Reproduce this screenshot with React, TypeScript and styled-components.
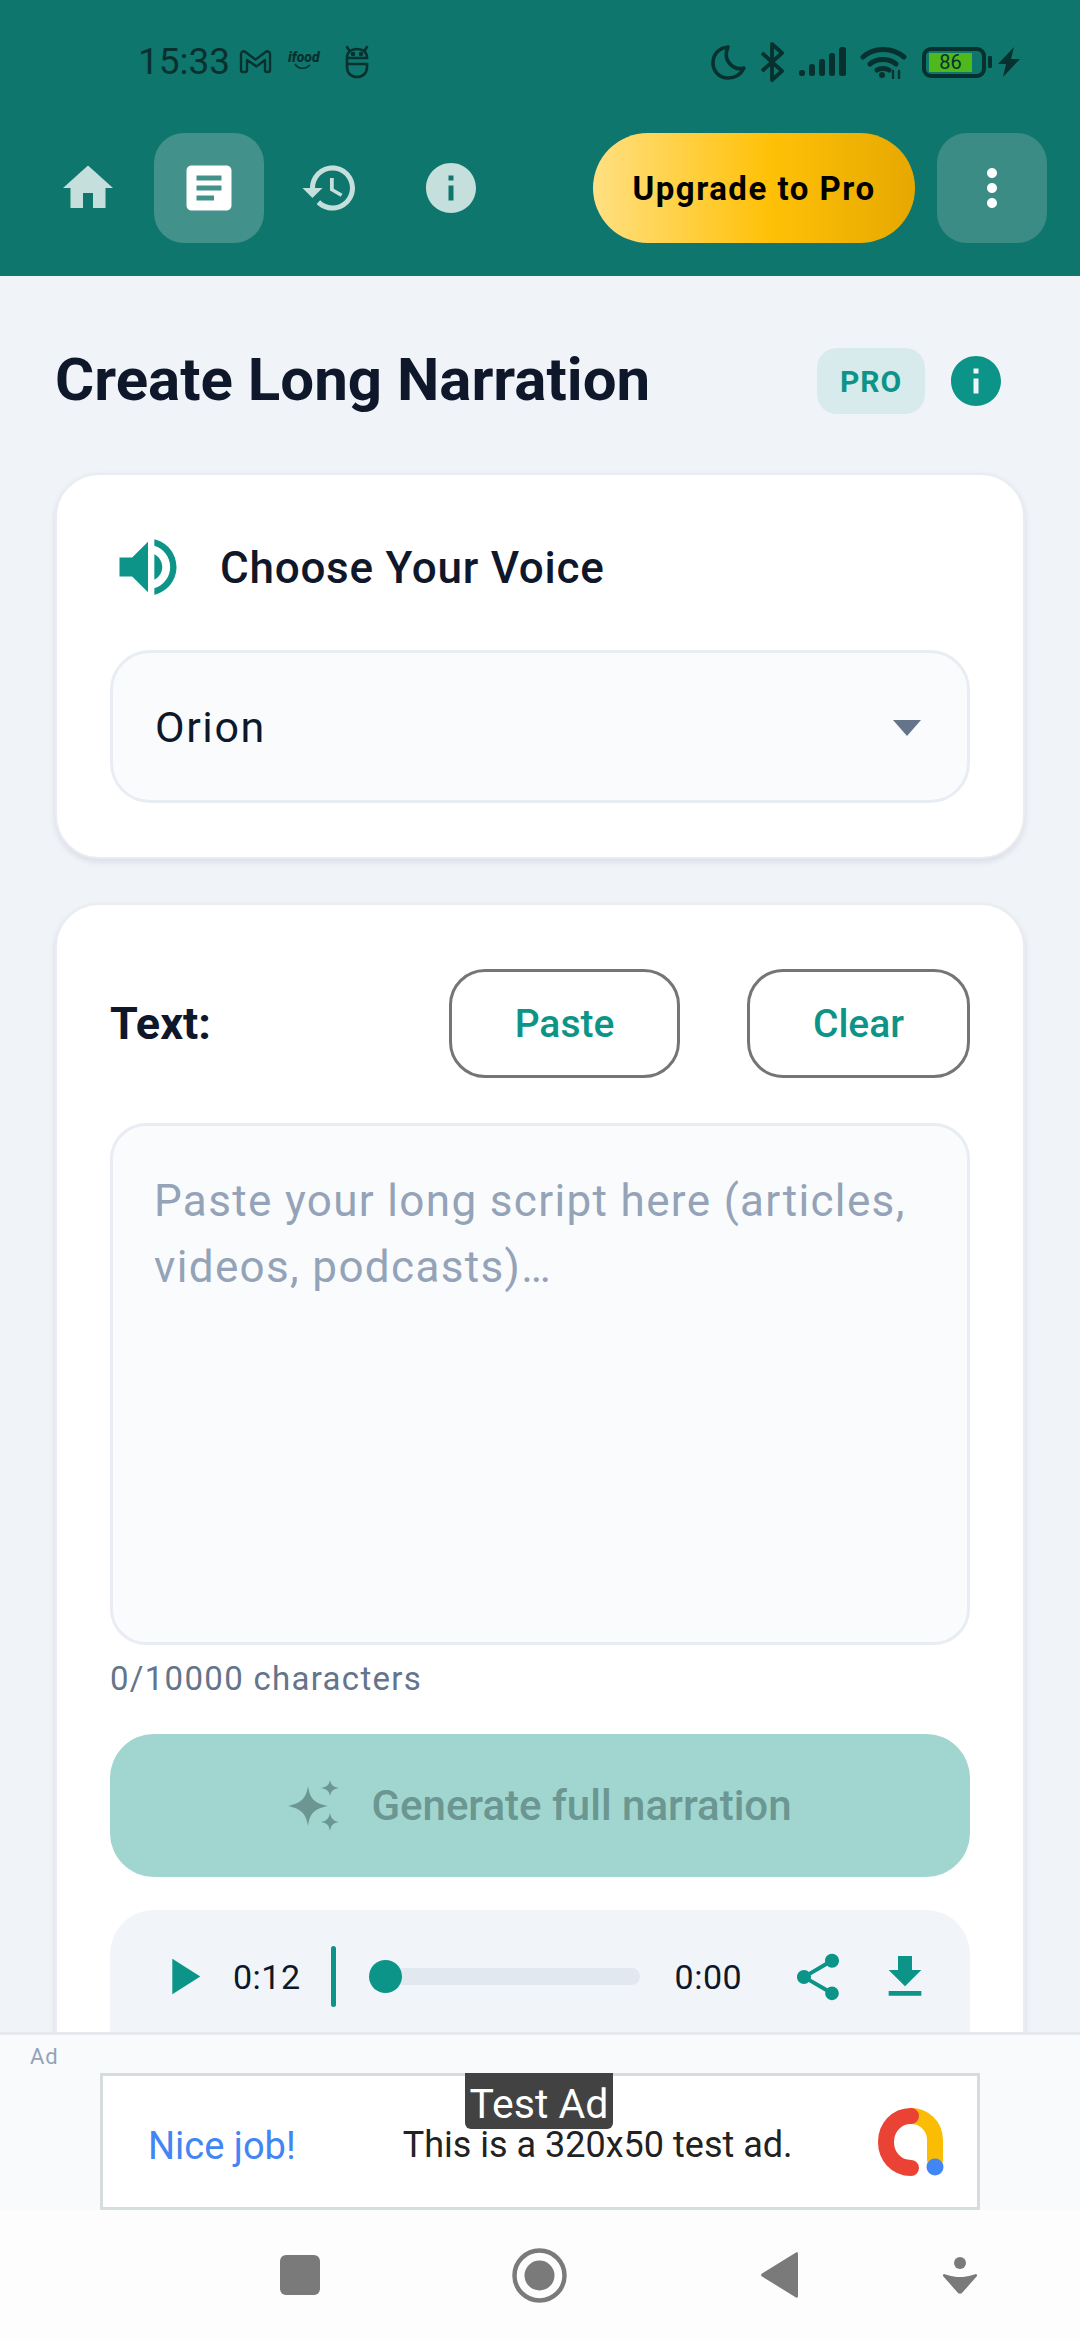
import styled, { createGlobalStyle } from "styled-components"

const GlobalStyle = createGlobalStyle`
  * { box-sizing: border-box; }
  html, body { margin: 0; padding: 0; background: #f0f4f9; }
  body { font-family: Roboto, "Noto Sans", sans-serif; }
`

const teal = "#0d9488"
const ink = "#0f172a"
const statusInk = "#07312f"

const Page = styled.div`
  width: 1080px;
  height: 2340px;
  display: flex;
  flex-direction: column;
  overflow: hidden;
`

const Header = styled.header`
  height: 276px;
  flex: none;
  background: #0f766e;
`

const StatusBar = styled.div`
  height: 133px;
  padding: 42px 60px 0 138px;
  display: flex;
  align-items: flex-start;
  justify-content: space-between;
  color: ${statusInk};
`

const StatusGroup = styled.div`
  height: 40px;
  display: flex;
  align-items: center;
`

const Clock = styled.span`
  font-size: 37px;
  line-height: 40px;
  width: 101px;
`

const StatusIcon = styled.svg<{ $gap?: number }>`
  flex: none;
  margin-left: ${(p) => p.$gap ?? 0}px;
  color: ${statusInk};
`

const FoodLogo = styled.span`
  position: relative;
  margin-left: 16px;
  width: 36px;
  height: 24px;
  font-size: 14px;
  line-height: 14px;
  font-weight: 900;
  font-style: italic;
  letter-spacing: 0;
  svg {
    position: absolute;
    left: 6px;
    top: 13px;
  }
`

const BatteryShell = styled.div`
  position: relative;
  margin-left: 15px;
  width: 64px;
  height: 31px;
  border: 4px solid ${statusInk};
  border-radius: 9px;
  padding: 2px 10px 2px 3px;
`

const BatteryFill = styled.div`
  height: 100%;
  background: #4fb81d;
  font-size: 20px;
  line-height: 19px;
  text-align: center;
  color: ${statusInk};
`

const BatteryNub = styled.div`
  width: 4px;
  height: 12px;
  margin-left: 2px;
  background: ${statusInk};
  border-radius: 1px;
`

const NavRow = styled.nav`
  height: 110px;
  padding: 0 33px;
  display: flex;
  gap: 11px;
`

const NavTile = styled.div<{ $active?: boolean; $solid?: boolean }>`
  width: 110px;
  height: 110px;
  display: grid;
  place-items: center;
  border-radius: 30px;
  background: ${(p) => (p.$active ? "#42918a" : p.$solid ? "#3a8c84" : "transparent")};
  color: ${(p) => (p.$active || p.$solid ? "#ffffff" : "#c5dfdc")};
`

const UpgradeButton = styled.div`
  width: 322px;
  height: 110px;
  margin-left: auto;
  margin-right: 11px;
  display: grid;
  place-items: center;
  border-radius: 55px;
  background: linear-gradient(90deg, #ffe082 0%, #ffc107 55%, #e6a800 100%);
  color: #000000;
  font-size: 33px;
  font-weight: 700;
  letter-spacing: 1.5px;
`

const Main = styled.main`
  flex: 1;
  min-height: 0;
  overflow: hidden;
  padding: 72px 55px 0;
`

const TitleRow = styled.div`
  height: 66px;
  padding-right: 19px;
  display: flex;
  align-items: center;
  margin-bottom: 59px;
`

const Title = styled.h1`
  flex: 1;
  margin: -2px 0 0 0;
  font-size: 60px;
  line-height: 66px;
  font-weight: 700;
  color: ${ink};
`

const ProBadge = styled.div`
  width: 108px;
  height: 66px;
  display: grid;
  place-items: center;
  border-radius: 20px;
  background: #d7ebec;
  color: ${teal};
  font-size: 30px;
  font-weight: 700;
  letter-spacing: 1px;
`

const InfoWrap = styled.div`
  margin-left: 21px;
  color: ${teal};
  height: 60px;
`

const Card = styled.section`
  background: #ffffff;
  border: 2px solid #e9edf2;
  border-radius: 44px;
  padding: 62px 53px 54px;
  box-shadow: 0 3px 6px rgba(15, 23, 42, 0.1);
`

const SecondCard = styled(Card)`
  margin-top: 44px;
  padding-top: 64px;
  padding-bottom: 0;
`

const VoiceHeading = styled.div`
  height: 60px;
  display: flex;
  align-items: center;
  gap: 34px;
  margin-bottom: 53px;
  color: ${teal};
`

const VoiceLabel = styled.h2`
  margin: 2px 0 0;
  font-size: 44px;
  font-weight: 500;
  letter-spacing: 0.75px;
  color: ${ink};
`

const Select = styled.div`
  height: 153px;
  padding: 0 42px;
  display: flex;
  align-items: center;
  justify-content: space-between;
  background: #f9fbfd;
  border: 3px solid #e8edf3;
  border-radius: 40px;
  font-size: 43px;
  letter-spacing: 1.6px;
  color: ${ink};
`

const Caret = styled.div`
  width: 0;
  height: 0;
  margin: 2px 4px 0 0;
  border-left: 14px solid transparent;
  border-right: 14px solid transparent;
  border-top: 16px solid #64748b;
`

const TextHead = styled.div`
  height: 109px;
  display: flex;
  align-items: center;
`

const TextLabel = styled.h2`
  flex: 1;
  margin: 0;
  font-size: 45px;
  font-weight: 700;
  color: ${ink};
`

const OutlineButton = styled.div<{ $width: number }>`
  width: ${(p) => p.$width}px;
  height: 109px;
  margin-left: ${(p) => (p.$width > 225 ? 0 : 67)}px;
  display: grid;
  place-items: center;
  border: 3px solid #757575;
  border-radius: 36px;
  font-size: 39px;
  font-weight: 500;
  color: ${teal};
`

const ScriptInput = styled.textarea`
  display: block;
  width: 100%;
  height: 522px;
  margin-top: 45px;
  padding: 42px 41px;
  background: #f9fbfd;
  border: 3px solid #e8edf3;
  border-radius: 36px;
  outline: none;
  resize: none;
  font-family: Roboto, sans-serif;
  font-size: 44px;
  line-height: 66px;
  letter-spacing: 1.35px;
  &::placeholder {
    color: #94a3b8;
    opacity: 1;
  }
`

const Counter = styled.div`
  margin-top: 14px;
  font-size: 33px;
  line-height: 40px;
  letter-spacing: 1.3px;
  color: #64748b;
`

const GenerateButton = styled.div`
  height: 143px;
  margin-top: 35px;
  display: flex;
  align-items: center;
  justify-content: center;
  gap: 31px;
  border-radius: 44px;
  background: #a0d6cf;
  color: #6b9692;
  font-size: 42px;
  font-weight: 500;
`

const Player = styled.div`
  height: 180px;
  margin-top: 33px;
  padding: 36px 0 0 42px;
  display: flex;
  align-items: flex-start;
  background: #f1f5f9;
  border-radius: 44px;
  color: ${teal};
`

const PlayerSlot = styled.div<{ $gap?: number }>`
  height: 61px;
  flex: none;
  margin-left: ${(p) => p.$gap ?? 0}px;
  display: flex;
  align-items: center;
`

const TimeText = styled(PlayerSlot)`
  font-size: 34px;
  letter-spacing: 0.5px;
  color: ${ink};
`

const Divider = styled(PlayerSlot)`
  width: 5px;
  border-radius: 3px;
  background: ${teal};
`

const Slider = styled(PlayerSlot)`
  position: relative;
  width: 271px;
`

const SliderTrack = styled.div`
  width: 100%;
  height: 17px;
  border-radius: 9px;
  background: #e2e8f0;
`

const SliderThumb = styled.div`
  position: absolute;
  left: 0;
  top: 14px;
  width: 33px;
  height: 33px;
  border-radius: 50%;
  background: ${teal};
`

const AdBar = styled.div`
  height: 178px;
  flex: none;
  position: relative;
  display: flex;
  flex-direction: column;
  background: #f8fafc;
  border-top: 3px solid #e5e9ee;
`

const AdTag = styled.div`
  padding: 9px 0 0 30px;
  height: 38px;
  font-size: 22px;
  line-height: 26px;
  letter-spacing: 1px;
  color: #94a3b8;
`

const AdBox = styled.div`
  position: relative;
  width: 880px;
  height: 137px;
  margin-left: 100px;
  padding: 0 33px 0 45px;
  display: flex;
  align-items: center;
  background: #ffffff;
  border: 3px solid #d5dedc;
  color: #222222;
`

const AdLabel = styled.div`
  position: absolute;
  left: 362px;
  top: -3px;
  width: 148px;
  height: 56px;
  display: grid;
  place-items: center;
  border-radius: 0 0 6px 6px;
  background: #424242;
  color: #ffffff;
  font-size: 41px;
  line-height: 56px;
  padding-top: 3px;
`

const AdHeadline = styled.div`
  padding-top: 9px;
  font-size: 38px;
  color: #4285f4;
`

const AdBody = styled.div`
  flex: 1;
  padding: 7px 0 0 107px;
  font-size: 36px;
`

const SystemNav = styled.div`
  height: 130px;
  flex: none;
  padding-left: 280px;
  display: flex;
  align-items: center;
  background: #fdfdfd;
  color: #7a7a7a;
`

const SystemIcon = styled.svg<{ $gap?: number }>`
  flex: none;
  margin-left: ${(p) => p.$gap ?? 0}px;
`

function MaterialIcon({ d, size = 60 }: { d: string; size?: number }) {
  return (
    <svg width={size} height={size} viewBox="0 0 24 24" fill="currentColor">
      <path d={d} />
    </svg>
  )
}

const icons = {
  home: "M10 20v-6h4v6h5v-8h3L12 3 2 12h3v8z",
  article:
    "M19 3H5c-1.1 0-2 .9-2 2v14c0 1.1.9 2 2 2h14c1.1 0 2-.9 2-2V5c0-1.1-.9-2-2-2zm-5 14H7v-2h7v2zm3-4H7v-2h10v2zm0-4H7V7h10v2z",
  history:
    "M13 3c-4.97 0-9 4.03-9 9H1l3.89 3.89.07.14L9 12H6c0-3.87 3.13-7 7-7s7 3.13 7 7-3.13 7-7 7c-1.93 0-3.68-.79-4.94-2.06l-1.42 1.42C8.27 19.99 10.51 21 13 21c4.97 0 9-4.03 9-9s-4.03-9-9-9zm-1 5v5l4.28 2.54.72-1.21-3.5-2.08V8H12z",
  info: "M12 2C6.48 2 2 6.48 2 12s4.48 10 10 10 10-4.48 10-10S17.52 2 12 2zm1 15h-2v-6h2v6zm0-8h-2V7h2v2z",
  more: "M12 8c1.1 0 2-.9 2-2s-.9-2-2-2-2 .9-2 2 .9 2 2 2zm0 2c-1.1 0-2 .9-2 2s.9 2 2 2 2-.9 2-2-.9-2-2-2zm0 6c-1.1 0-2 .9-2 2s.9 2 2 2 2-.9 2-2-.9-2-2-2z",
  volume:
    "M3 9v6h4l5 5V4L7 9H3zm13.5 3c0-1.77-1.02-3.29-2.5-4.03v8.05c1.48-.73 2.5-2.25 2.5-4.02zM14 3.23v2.06c2.89.86 5 3.54 5 6.71s-2.11 5.85-5 6.71v2.06c4.01-.91 7-4.49 7-8.77s-2.99-7.86-7-8.77z",
  play: "M8 5v14l11-7z",
  share:
    "M18 16.08c-.76 0-1.44.3-1.96.77L8.91 12.7c.05-.23.09-.46.09-.7s-.04-.47-.09-.7l7.05-4.11c.54.5 1.25.81 2.04.81 1.66 0 3-1.34 3-3s-1.34-3-3-3-3 1.34-3 3c0 .24.04.47.09.7L8.04 9.81C7.5 9.31 6.79 9 6 9c-1.66 0-3 1.34-3 3s1.34 3 3 3c.79 0 1.5-.31 2.04-.81l7.12 4.16c-.05.21-.08.43-.08.65 0 1.61 1.31 2.92 2.92 2.92 1.61 0 2.92-1.31 2.92-2.92s-1.31-2.92-2.92-2.92z",
  download: "M19 9h-4V3H9v6H5l7 7 7-7zM5 18v2h14v-2H5z",
}

function StatusLeft() {
  return (
    <StatusGroup>
      <Clock>15:33</Clock>
      <StatusIcon width="33" height="26" viewBox="0 0 33 26" fill="none" stroke="currentColor" strokeWidth="2.4" strokeLinejoin="round">
        <path d="M2 21V5c0-2.4 2.6-3.4 4.4-2l10.1 7.6L26.6 3c1.8-1.4 4.4-.4 4.4 2v16c0 1.2-.8 2-2 2h-1c-1.2 0-2-.8-2-2V11l-8.5 6.4L8 11v10c0 1.2-.8 2-2 2H4c-1.2 0-2-.8-2-2z" />
      </StatusIcon>
      <FoodLogo>
        ifood
        <svg width="18" height="8" viewBox="0 0 18 8" fill="none" stroke="currentColor" strokeWidth="1.6">
          <path d="M1 1c3 5 10 6 15 1" />
        </svg>
      </FoodLogo>
      <StatusIcon $gap={20} width="26" height="34" viewBox="0 0 26 34" fill="none" stroke="currentColor" strokeWidth="2.6" strokeLinecap="round">
        <path d="M3 2l2 3M23 2l-2 3" />
        <path d="M3 13c0-6 4-9 10-9s10 3 10 9H3M3 19h20v3c0 6-4 10-10 10S3 28 3 22V13" />
        <circle cx="9" cy="9" r="1" fill="currentColor" />
        <circle cx="17" cy="9" r="1" fill="currentColor" />
      </StatusIcon>
    </StatusGroup>
  )
}

function StatusRight() {
  return (
    <StatusGroup>
      <StatusIcon width="36" height="36" viewBox="0 0 36 36" fill="none" stroke="currentColor" strokeWidth="3.6" strokeLinejoin="round">
        <path d="M17 3C8 4 2 10 2 19c0 8 6 15 15 15 7 0 13-4 16-10-11 3-22-8-16-21z" />
      </StatusIcon>
      <StatusIcon $gap={13} width="25" height="40" viewBox="0 0 25 40" fill="none" stroke="currentColor" strokeWidth="3.8" strokeLinejoin="round">
        <path d="M2 11l20 18-10 9V2l10 9L2 29" />
      </StatusIcon>
      <StatusIcon $gap={13} width="49" height="32" viewBox="0 0 49 32" fill="currentColor">
        <rect x="1" y="24" width="6" height="6" rx="2.5" />
        <rect x="11" y="18" width="6" height="12" rx="2.5" />
        <rect x="21" y="13" width="6" height="17" rx="2.5" />
        <rect x="31" y="7" width="6" height="23" rx="2.5" />
        <rect x="41" y="1" width="7" height="29" rx="2.5" />
      </StatusIcon>
      <StatusIcon $gap={13} width="47" height="34" viewBox="0 0 47 34" fill="none" stroke="currentColor" strokeWidth="5" strokeLinecap="round">
        <path d="M3 12C14 2 32 2 44 12M10 19c7-6 19-6 26 0M17 25c3-2 9-2 12 0" />
        <circle cx="22" cy="30" r="3" fill="currentColor" stroke="none" />
        <path d="M33 26v7M39 26v7" strokeWidth="2.4" />
      </StatusIcon>
      <BatteryShell>
        <BatteryFill>86</BatteryFill>
      </BatteryShell>
      <BatteryNub />
      <StatusIcon $gap={6} width="22" height="30" viewBox="0 0 22 30" fill="currentColor">
        <path d="M16 0L0 17h8l-3 13 17-18h-9z" />
      </StatusIcon>
    </StatusGroup>
  )
}

function SparkleIcon() {
  return (
    <svg width="52" height="52" viewBox="0 0 52 52" fill="#6b9692">
      <path d="M20 6c2 13 6 17 20 20-14 3-18 7-20 20C18 33 13 29 0 26c13-3 18-7 20-20z" />
      <path d="M42 0c1 5 3 7 9 8-6 1-8 3-9 8-1-5-3-7-9-8 6-1 8-3 9-8zM42 33c1 5 3 8 9 9-6 1-8 3-9 9-1-6-3-8-9-9 6-1 8-4 9-9z" />
    </svg>
  )
}

function AdLogo() {
  return (
    <svg width="66" height="68" viewBox="0 0 66 68" fill="none" strokeLinecap="round">
      <path d="M57 52V32C57 18 46 8 33 8" stroke="#fbbc04" strokeWidth="16" />
      <path d="M33 8C18 8 8 20 8 34s10 26 25 26" stroke="#ea4335" strokeWidth="16" />
      <circle cx="57" cy="59" r="8.500" fill="#4285f4" />
    </svg>
  )
}

export default function App() {
  return (
    <Page>
      <GlobalStyle />
      <Header>
        <StatusBar>
          <StatusLeft />
          <StatusRight />
        </StatusBar>
        <NavRow>
          <NavTile><MaterialIcon d={icons.home} /></NavTile>
          <NavTile $active><MaterialIcon d={icons.article} /></NavTile>
          <NavTile><MaterialIcon d={icons.history} /></NavTile>
          <NavTile><MaterialIcon d={icons.info} /></NavTile>
          <UpgradeButton>Upgrade to Pro</UpgradeButton>
          <NavTile $solid><MaterialIcon d={icons.more} /></NavTile>
        </NavRow>
      </Header>

      <Main>
        <TitleRow>
          <Title>Create Long Narration</Title>
          <ProBadge>PRO</ProBadge>
          <InfoWrap><MaterialIcon d={icons.info} /></InfoWrap>
        </TitleRow>

        <Card>
          <VoiceHeading>
            <MaterialIcon d={icons.volume} size={76} />
            <VoiceLabel>Choose Your Voice</VoiceLabel>
          </VoiceHeading>
          <Select>
            Orion
            <Caret />
          </Select>
        </Card>

        <SecondCard>
          <TextHead>
            <TextLabel>Text:</TextLabel>
            <OutlineButton $width={231}>Paste</OutlineButton>
            <OutlineButton $width={223}>Clear</OutlineButton>
          </TextHead>
          <ScriptInput readOnly placeholder="Paste your long script here (articles, videos, podcasts)…" />
          <Counter>0/10000 characters</Counter>
          <GenerateButton>
            <SparkleIcon />
            Generate full narration
          </GenerateButton>
          <Player>
            <PlayerSlot><MaterialIcon d={icons.play} size={61} /></PlayerSlot>
            <TimeText $gap={20}>0:12</TimeText>
            <Divider $gap={30} />
            <Slider $gap={33}>
              <SliderTrack />
              <SliderThumb />
            </Slider>
            <TimeText $gap={35}>0:00</TimeText>
            <PlayerSlot $gap={48}><MaterialIcon d={icons.share} size={56} /></PlayerSlot>
            <PlayerSlot $gap={31}><MaterialIcon d={icons.download} size={56} /></PlayerSlot>
          </Player>
        </SecondCard>
      </Main>

      <AdBar>
        <AdTag>Ad</AdTag>
        <AdBox>
          <AdLabel>Test Ad</AdLabel>
          <AdHeadline>Nice job!</AdHeadline>
          <AdBody>This is a 320x50 test ad.</AdBody>
          <AdLogo />
        </AdBox>
      </AdBar>

      <SystemNav>
        <SystemIcon width="40" height="40" viewBox="0 0 40 40" fill="currentColor">
          <rect width="40" height="40" rx="6" />
        </SystemIcon>
        <SystemIcon $gap={192} width="55" height="55" viewBox="0 0 55 55" fill="none">
          <circle cx="27.5" cy="27.5" r="25" stroke="currentColor" strokeWidth="4.5" />
          <circle cx="27.5" cy="27.5" r="15" fill="currentColor" />
        </SystemIcon>
        <SystemIcon $gap={194} width="37" height="46" viewBox="0 0 37 46" fill="currentColor">
          <path d="M35 0.5c1.2-.6 2 0 2 1.5v42c0 1.500-.8 2.100-2 1.500L1 24.500c-1.300-.8-1.300-2.200 0-3z" />
        </SystemIcon>
        <SystemIcon $gap={145} width="34" height="37" viewBox="0 0 34 37" fill="currentColor">
          <circle cx="17" cy="6" r="6" />
          <path d="M1 17c5 1 8 3 16 3s11-2 16-3c1 0 1 1 1 2L19 36c-1 1-3 1-4 0L0 19c0-1 0-2 1-2z" />
        </SystemIcon>
      </SystemNav>
    </Page>
  )
}
